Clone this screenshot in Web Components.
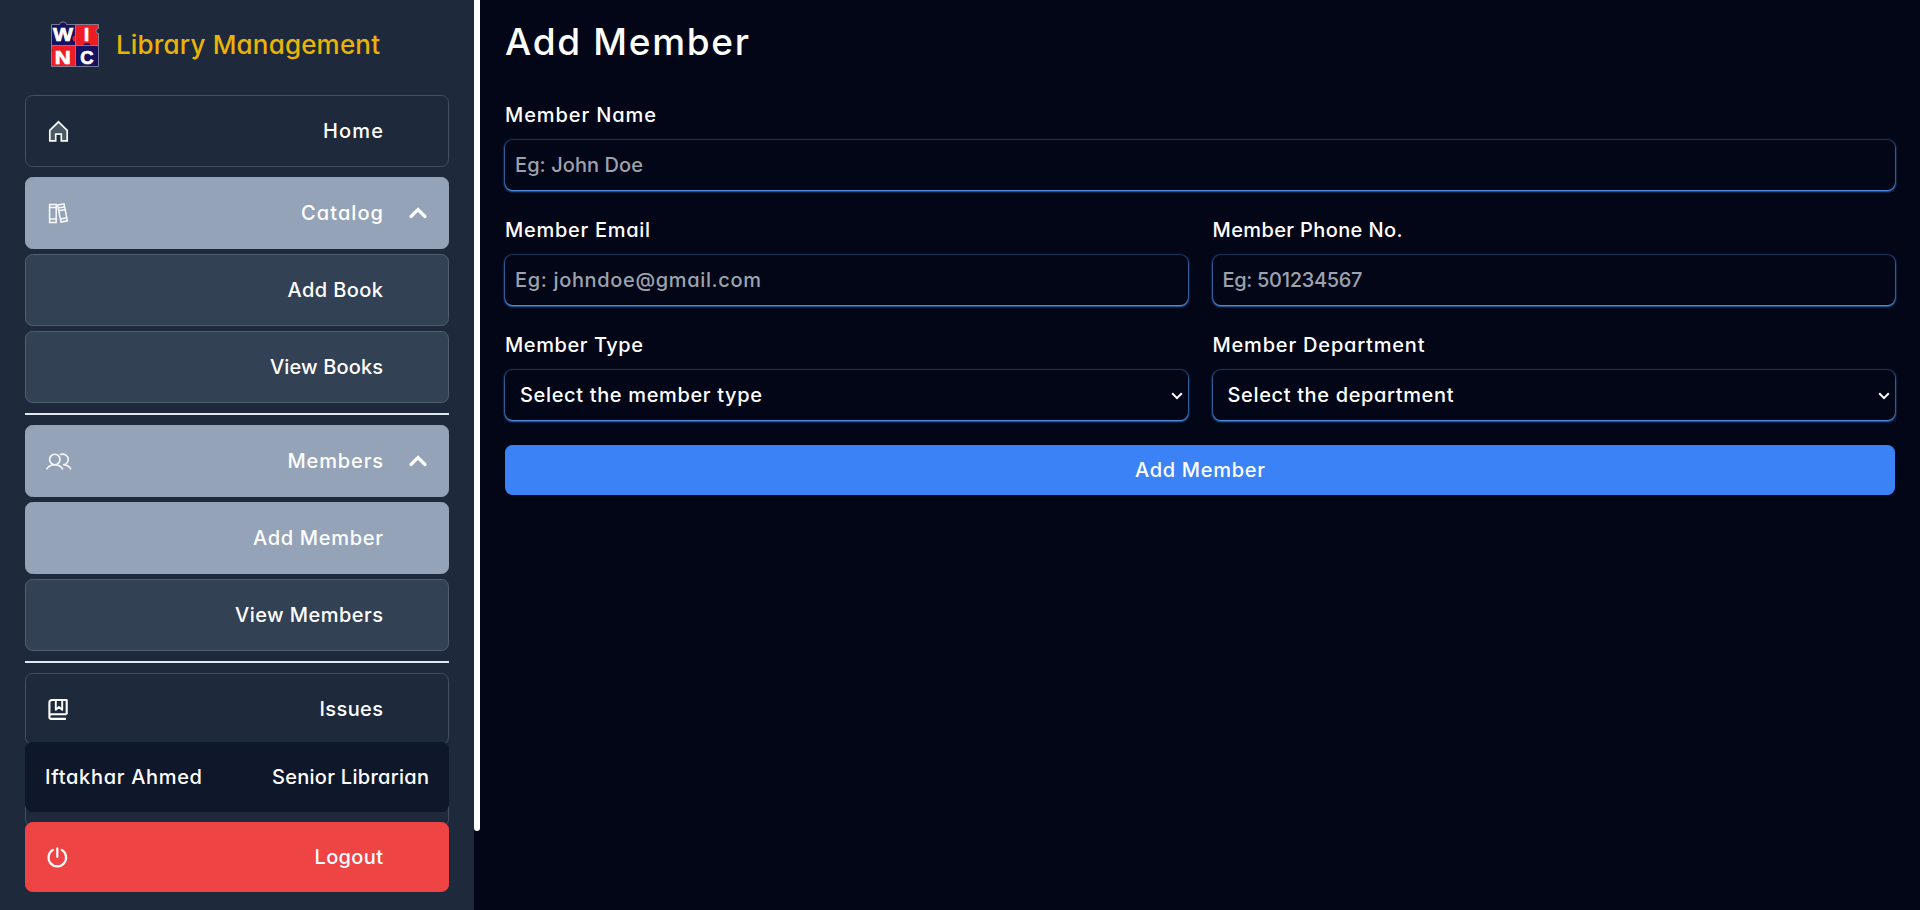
<!DOCTYPE html>
<html lang="en">
<head>
<meta charset="utf-8">
<title>Library Management</title>
<style>
html,body{margin:0;height:100%;overflow:hidden;background:#020617}
body{font:530 20px Inter,"Open Sans",sans-serif;font-feature-settings:"cv11";font-optical-sizing:none;font-variation-settings:"opsz" 14;color:#fff}
</style>
</head>
<body>
<library-app></library-app>
<script>
// Letter spacing that gives a run of text the wanted width in the given element's font.
function tracking(text, width, size, weight) {
  const s = document.createElement('span');
  s.style.cssText = `position:absolute;white-space:pre;visibility:hidden;font-size:${size}px;font-weight:${weight}`;
  s.textContent = text;
  document.body.append(s);
  const w = s.getBoundingClientRect().width;
  s.remove();
  return (width - w) / (text.length - 1);
}
const define = (name, html, setup) => customElements.define(name, class extends HTMLElement {
  connectedCallback() {
    if (this.shadowRoot) return;
    const root = this.attachShadow({mode: 'open'});
    root.innerHTML = '<style>*{box-sizing:border-box}:host{display:block;box-sizing:border-box}</style>' + html;
    if (setup) setup(this, root);
  }
});

define('t-text', `<style>:host{display:inline-block;white-space:pre}</style><slot></slot>`, host => {
  const size = +(host.getAttribute('size') || 20), weight = host.getAttribute('weight') || 530;
  const t = tracking(host.textContent, +host.getAttribute('w'), size, weight);
  host.style.cssText = `font-size:${size}px;font-weight:${weight};letter-spacing:${t}px;margin-right:${-t}px`;
});

const icons = {
  home: '<path d="M9.500 1 18.200 9.600V20h-5.900v-6.700H6.700V20H.8V9.600Z" fill="#4b5866" stroke="#f8fafc" stroke-width="1.700" transform="translate(1 -.2)"/>',
  books: '<g fill="none" stroke="#f8fafc" stroke-width="1.500"><path d="M1.600 1.600h6.600v17.800H1.600ZM1.600 4.500h6.600M1.600 16.100h6.600"/><path d="m9.600 2.100 6.400-1.300 3.400 17-6.400 1.300ZM10.300 5.100l6.400-1.300M10.900 7.700l6.400-1.300M12.500 16l6.400-1.300"/></g>',
  users: '<g fill="none" stroke="#f8fafc" stroke-width="1.600" stroke-linecap="round" transform="translate(-1.500 .5)"><circle cx="8.300" cy="8" r="5.200"/><path d="M.4 17.300c1.800-2.800 4.400-4.100 7.800-4.100s6 1.300 7.800 4.100M13.900 2.900c4.300-1.200 7.800 1.500 7.800 5.100 0 3-2.400 5.200-5.200 5.200 3.400 0 6 1.400 7.700 4.100"/></g>',
  issue: '<g fill="none" stroke="#fff" stroke-width="2.100" stroke-linejoin="round"><path d="M18.700 15.300V1H3.800a2.400 2.400 0 0 0-2.400 2.400v14.800a1.600 1.600 0 0 0 1.600 1.700h14.900M1.400 17.300c0-1.600.9-2.100 2.300-2.100h15"/><path d="M7.800 1.100V10.800l3.200-2.700 3.200 2.700V1.100" stroke-width="1.900"/></g>',
  power: '<g fill="none" stroke="#fff" stroke-width="2.200" stroke-linecap="round" transform="translate(-.7 0)"><path d="M5.600 2.900a8.800 8.800 0 1 0 8.800 0M10 1.400v8.600"/></g>'
};

define('nav-item', `
<style>
:host{height:72px;border:1px solid #434f62;border-radius:7.5px;display:grid;grid-template-columns:68px 1fr 65px;align-items:center;background:#1e293b}
:host([sub]){background:#334155;border-color:#505e72}
:host([active]){background:#94a3b8;border-color:#94a3b8}
:host([danger]){background:#ef4444;border-color:#ef4444;height:70px}
.ic{display:flex;padding-left:22px}
.lb{text-align:right}
.ch{display:flex;padding-left:26px}
svg{overflow:visible;display:block}
</style>
<div class="ic"></div><div class="lb"><slot></slot></div><div class="ch"></div>`, (host, root) => {
  const i = host.getAttribute('icon');
  if (i) root.querySelector('.ic').innerHTML = `<svg width="21" height="21" viewBox="0 0 21 21">${icons[i]}</svg>`;
  if (host.hasAttribute('open')) root.querySelector('.ch').innerHTML = '<svg width="18" height="12" viewBox="0 0 18 12"><path d="M2 9.500 9 2.600l7 6.900" fill="none" stroke="#fff" stroke-width="3.200" stroke-linecap="round"/></svg>';
});

define('brand-mark', `
<style>:host{height:46px;display:flex;align-items:center;gap:16px;padding-left:25px;color:#eab308}svg{display:block}t-text{padding-bottom:2px}</style>
<svg width="50" height="48" viewBox="0 0 50 48">
<path d="M1.500 3.500h8a3.500 2.600 0 0 1 7 0h9v21h-24Z" fill="#17115f"/>
<path d="M25.500 3.500h23v4a2.500 2.500 0 0 0 0 5v12h-23v-4a3 3 0 0 1 0-6Z" fill="#ee1c25"/>
<path d="M1.500 24.500h24v12a3 3 0 0 1 0 6v3h-24v-14a2.500 2.500 0 0 0 0-4Z" fill="#ee1c25"/>
<path d="M25.500 24.500h8a3.500 2.600 0 0 1 7 0h8v21h-10a3.500 2.600 0 0 0-7 0h-6Z" fill="#17115f"/>
<path d="M1.500 3.500h8a3.500 2.600 0 0 1 7 0h32v4a2.500 2.500 0 0 0 0 5v33h-47ZM1.500 24.500h47M25.500 4v41" fill="none" stroke="#8b93a8" stroke-width=".8"/>
<g fill="#fff" stroke="#fff" stroke-width=".7" font-family="Liberation Sans,sans-serif" font-weight="700" font-size="18.500" text-anchor="middle">
<text x="12.900" y="20.300" textLength="20" lengthAdjust="spacingAndGlyphs">W</text><text x="36.500" y="20.300">I</text><text x="12.800" y="42.600" textLength="16" lengthAdjust="spacingAndGlyphs">N</text><text x="37" y="42.600">C</text></g>
</svg><t-text size="26" weight="450" w="264">Library Management</t-text>`);

define('side-bar', `
<style>
:host{width:474px;height:910px;background:#1e293b;padding:0 25px;position:relative;overflow:hidden}
brand-mark{margin:22px 0 27px}
nav{display:flex;flex-direction:column;gap:10px}
section{display:flex;flex-direction:column;gap:5px;padding-bottom:10px;border-bottom:2px solid #e2e8f0}
footer{position:absolute;left:25px;right:25px;bottom:18px;display:flex;flex-direction:column;gap:10px}
.user{height:70px;border-radius:7.5px;background:#0f172a;display:flex;justify-content:space-between;align-items:center;padding:0 20px}
</style>
<brand-mark></brand-mark>
<nav>
<nav-item icon="home"><t-text w="60">Home</t-text></nav-item>
<section>
<nav-item icon="books" active open><t-text w="82">Catalog</t-text></nav-item>
<nav-item sub><t-text w="95.500">Add Book</t-text></nav-item>
<nav-item sub><t-text w="113">View Books</t-text></nav-item>
</section>
<section>
<nav-item icon="users" active open><t-text w="95.500">Members</t-text></nav-item>
<nav-item sub active><t-text w="130">Add Member</t-text></nav-item>
<nav-item sub><t-text w="148">View Members</t-text></nav-item>
</section>
<nav-item icon="issue"><t-text w="63.500">Issues</t-text></nav-item>
<nav-item></nav-item>
</nav>
<footer>
<div class="user"><t-text w="157">Iftakhar Ahmed</t-text><t-text w="157">Senior Librarian</t-text></div>
<nav-item icon="power" danger><t-text w="68.500">Logout</t-text></nav-item>
</footer>`);

define('form-field', `
<style>
:host{display:flex;flex-direction:column;gap:10px}
label{height:30px;line-height:30px}
input,select{height:50px;width:100%;border:0;outline:0;border-radius:7.5px;background:#020617;color:#fff;font:inherit;font-feature-settings:inherit;font-optical-sizing:inherit;font-variation-settings:inherit;padding:0 10px;box-shadow:0 0 0 1px rgba(96,165,250,.14),0 1px 3px 0 #60a5fa,0 1px 2px 0 #2f6bc4}
select{appearance:none;padding:0 0 0 15px;background:#020617 url("data:image/svg+xml,%3Csvg xmlns='http://www.w3.org/2000/svg' width='12' height='8'%3E%3Cpath d='M1.200 1.300 6 6.100l4.800-4.800' fill='none' stroke='white' stroke-width='2'/%3E%3C/svg%3E") no-repeat right 5px top 22px}
input::placeholder{color:#9ca3af;opacity:1;font-weight:500}
</style><label></label>`, (host, root) => {
  const a = n => host.getAttribute(n);
  root.querySelector('label').innerHTML = `<t-text w="${a('lw')}">${a('label')}</t-text>`;
  const select = a('kind') === 'select';
  const field = document.createElement(select ? 'select' : 'input');
  if (select) field.add(new Option(a('hint'))); else field.placeholder = a('hint');
  field.style.letterSpacing = tracking(a('hint'), +a('hw'), 20, select ? 530 : 500) + 'px';
  root.append(field);
});

define('member-form', `
<style>
:host{flex:1;padding:15px 25px}
h1{margin:0 0 31px;height:54px;line-height:54px;font-size:37px;font-weight:500}
form{display:grid;grid-template-columns:1fr 1fr;gap:25px}
.wide{grid-column:1/3}
button{height:50px;border:0;border-radius:7.5px;background:#3b82f6;color:#fff;font:inherit;font-feature-settings:inherit;font-optical-sizing:inherit;font-variation-settings:inherit}
</style>
<h1><t-text size="37" weight="520" w="244">Add Member</t-text></h1>
<form>
<form-field class="wide" label="Member Name" lw="151" hint="Eg: John Doe" hw="128"></form-field>
<form-field label="Member Email" lw="145" hint="Eg: johndoe@gmail.com" hw="246"></form-field>
<form-field label="Member Phone No." lw="190" hint="Eg: 501234567" hw="140"></form-field>
<form-field label="Member Type" lw="138" kind="select" hint="Select the member type" hw="242"></form-field>
<form-field label="Member Department" lw="212" kind="select" hint="Select the department" hw="226"></form-field>
<button class="wide" type="button"><t-text w="130">Add Member</t-text></button>
</form>`);

define('library-app', `
<style>
:host{display:flex;height:910px}
.scroll{width:6px}
.thumb{height:831px;border-radius:0 0 3px 3px;background:#fff}
</style>
<side-bar></side-bar><div class="scroll"><div class="thumb"></div></div><member-form></member-form>`);
</script>
</body>
</html>
